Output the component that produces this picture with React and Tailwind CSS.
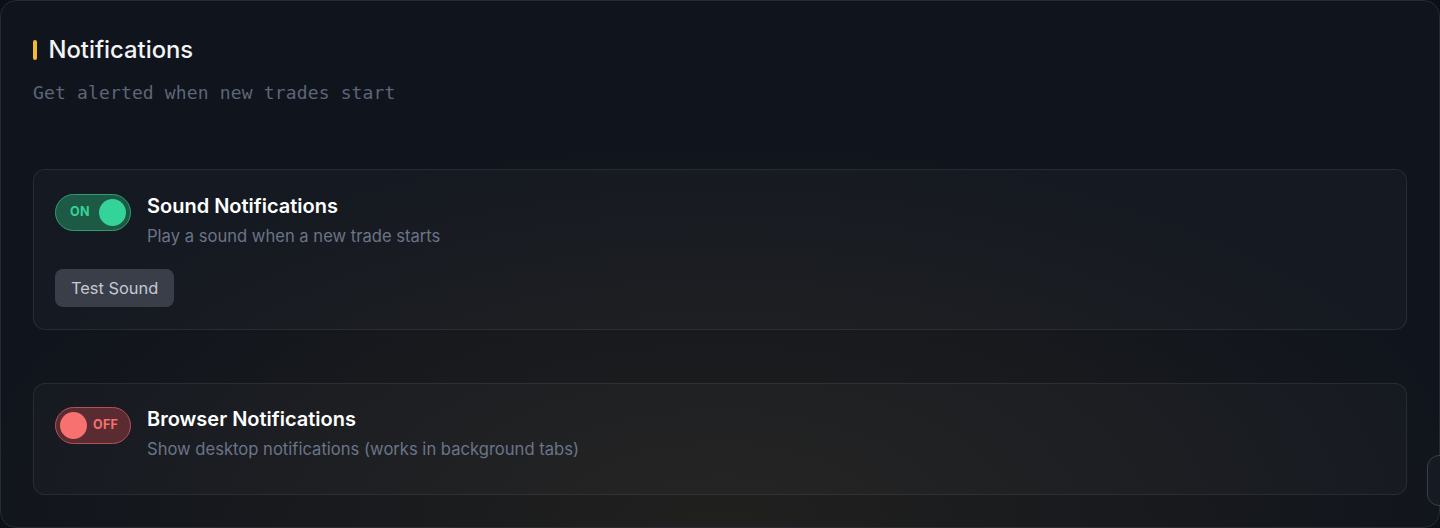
import React, { useState } from 'react';

function Toggle({ on, onChange }) {
  return (
    <button
      onClick={onChange}
      className={`${
        on ? 'bg-[#1c5a45] border-[#2e9d70]' : 'bg-[#5a2b30] border-[#b5505a]'
      } relative flex items-center shrink-0 w-[76px] h-[37px] rounded-full border-[1.5px] px-[4px]`}
    >
      {on ? (
        <>
          <span className="ml-[10px] text-[12.5px] font-bold tracking-wide text-[#34d399]">ON</span>
          <span className="ml-auto w-[27px] h-[27px] rounded-full bg-[#34d399]" />
        </>
      ) : (
        <>
          <span className="w-[27px] h-[27px] rounded-full bg-[#f87171]" />
          <span className="ml-[6px] text-[12.5px] font-bold tracking-wide text-[#f87171]">OFF</span>
        </>
      )}
    </button>
  );
}

export default function App() {
  const [sound, setSound] = useState(true);
  const [browser, setBrowser] = useState(false);

  return (
    <div className="relative w-full h-[528px] overflow-hidden bg-[#0b0f18] font-['Inter',sans-serif]">
      {/* Main panel */}
      <div className="h-full rounded-2xl border border-[#262b36] bg-[#10141c] bg-[radial-gradient(ellipse_55%_75%_at_50%_100%,rgba(120,95,45,0.16),transparent)] px-[32px] pt-[35px]">
        {/* Header */}
        <div className="flex items-center gap-3 h-[28px]">
          <span className="w-[3.5px] h-[20px] rounded-sm bg-[#f5b82e]" />
          <h2 className="text-[23.8px] font-medium text-[#f3f4f6]">Notifications</h2>
        </div>
        <p className="mt-[17px] font-['DejaVu_Sans_Mono',monospace] text-[18px] leading-6 tracking-[0.15px] text-[#5d6678]">
          Get alerted when new trades start
        </p>

        {/* Sound card */}
        <div className="mt-[64px] rounded-xl border border-white/[0.08] bg-white/[0.025] px-[21px] pt-[24px] pb-[22px]">
          <div className="flex gap-4">
            <Toggle on={sound} onChange={() => setSound(!sound)} />
            <div>
              <div className="text-[20px] font-semibold leading-[25px] text-white">Sound Notifications</div>
              <div className="mt-[5px] text-[16.6px] leading-6 text-[#6b7488]">Play a sound when a new trade starts</div>
            </div>
          </div>
          <button className="mt-[21px] h-[38px] px-4 rounded-lg bg-[#3a3e49] text-[16.4px] text-[#c5c9d1]">
            Test Sound
          </button>
        </div>

        {/* Browser card */}
        <div className="mt-[53px] rounded-xl border border-white/[0.08] bg-white/[0.025] px-[21px] pt-[23px] pb-[33px]">
          <div className="flex gap-4">
            <Toggle on={browser} onChange={() => setBrowser(!browser)} />
            <div>
              <div className="text-[20px] font-semibold leading-[25px] text-white">Browser Notifications</div>
              <div className="mt-[5px] text-[16.6px] leading-6 text-[#6b7488]">
                Show desktop notifications (works in background tabs)
              </div>
            </div>
          </div>
        </div>
      </div>

      {/* Floating tab at right edge */}
      <div className="absolute left-[1427px] top-[455px] w-[40px] h-[51px] rounded-xl border border-[#3a3f4a] bg-[#161a22]" />
    </div>
  );
}
